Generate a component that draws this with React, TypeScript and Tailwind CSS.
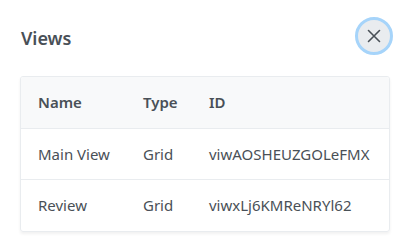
import React from "react";

const rows = [
  { name: "Main View", type: "Grid", id: "viwAOSHEUZGOLeFMX" },
  { name: "Review", type: "Grid", id: "viwxLj6KMReNRYl62" },
];

export default function App() {
  return (
    <div
      className="w-[414px] h-[252px] bg-white px-5 text-[#495057]"
      style={{ fontFamily: '"Noto Sans", "Open Sans", sans-serif' }}
    >
      <div className="flex items-center justify-between pt-[15px] pr-[1px]">
        <h2 className="text-[18px] font-semibold leading-[38px] pl-[1px] pt-[4px]">Views</h2>
        <button className="w-[38px] h-[38px] rounded-full bg-[#e9ecef] border-[3px] border-[#a6d4fa] flex items-center justify-center text-[#495057]">
          <svg width="16" height="16" viewBox="0 0 16 16" fill="none" stroke="currentColor" strokeWidth="1.6" strokeLinecap="round">
            <path d="M2.5 2.5 L13.5 13.5 M13.5 2.5 L2.5 13.5" />
          </svg>
        </button>
      </div>
      <div className="mt-[19px] w-[370px] border border-[#e9ecef] rounded-[3px] shadow-[0_2px_3px_rgba(0,0,0,0.06)] overflow-hidden text-[15px]">
        <div className="grid grid-cols-[105px_66px_1fr] h-[52px] items-center bg-[#f8f9fa] border-b border-[#e9ecef] font-semibold">
          <div className="pl-[17px]">Name</div>
          <div className="pl-[17px]">Type</div>
          <div className="pl-[17px]">ID</div>
        </div>
        {rows.map((r, i) => (
          <div
            key={r.id}
            className={
              "grid grid-cols-[105px_66px_1fr] h-[51px] items-center " +
              (i < rows.length - 1 ? "border-b border-[#e9ecef]" : "")
            }
          >
            <div className="pl-[17px]">{r.name}</div>
            <div className="pl-[17px]">{r.type}</div>
            <div className="pl-[17px]">{r.id}</div>
          </div>
        ))}
      </div>
    </div>
  );
}
